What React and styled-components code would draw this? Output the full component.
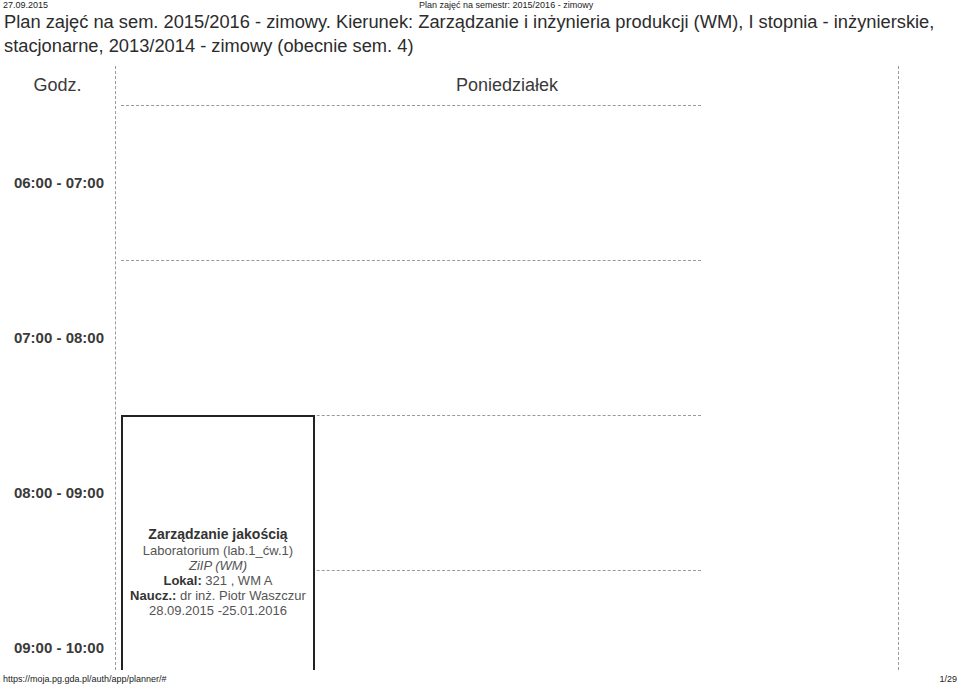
import React from 'react';
import styled, { createGlobalStyle } from 'styled-components';

const GlobalStyle = createGlobalStyle`
  html, body {
    margin: 0;
    padding: 0;
    background: #fff;
  }
  body {
    font-family: "Liberation Sans", Arial, sans-serif;
    color: #333;
  }
`;

const hours = ['06:00 - 07:00', '07:00 - 08:00', '08:00 - 09:00', '09:00 - 10:00'];

const HEAD_HEIGHT = 39;
const ROW_HEIGHT = 155;

// event placed on the day canvas by its start hour and length
const event = {
  startIndex: 2,
  length: 2,
};

const App = () => {
  return (
    <Page>
      <GlobalStyle />
      <PrintBar>
        <PrintDate>27.09.2015</PrintDate>
        <PrintTitle>Plan zajęć na semestr: 2015/2016 - zimowy</PrintTitle>
      </PrintBar>

      <Title>
        Plan zajęć na sem. 2015/2016 - zimowy. Kierunek: Zarządzanie i inżynieria produkcji (WM), I stopnia - inżynierskie, stacjonarne, 2013/2014 - zimowy (obecnie sem. 4)
      </Title>

      <Schedule>
        <TimeColumn>
          <HeadCell>Godz.</HeadCell>
          {hours.map((h) => (
            <TimeCell key={h}>{h}</TimeCell>
          ))}
        </TimeColumn>

        <DayColumn>
          <HeadCell>Poniedziałek</HeadCell>
          {hours.map((h) => (
            <HourSlot key={h} />
          ))}
          <EventBox
            style={{
              top: HEAD_HEIGHT + event.startIndex * ROW_HEIGHT,
              height: event.length * ROW_HEIGHT,
            }}
          >
            <EventTitle>Zarządzanie jakością</EventTitle>
            <EventLine>Laboratorium (lab.1_ćw.1)</EventLine>
            <EventLine italic>ZiIP (WM)</EventLine>
            <EventLine>
              <strong>Lokal:</strong> 321 , WM A
            </EventLine>
            <EventLine>
              <strong>Naucz.:</strong> dr inż. Piotr Waszczur
            </EventLine>
            <EventLine>28.09.2015 -25.01.2016</EventLine>
          </EventBox>
        </DayColumn>
      </Schedule>

      <PrintFooter>
        <span>https://moja.pg.gda.pl/auth/app/planner/#</span>
        <span>1/29</span>
      </PrintFooter>
    </Page>
  );
};

const Page = styled.div`
  width: 959px;
  height: 687px;
  overflow: hidden;
  display: flex;
  flex-direction: column;
`;

const PrintBar = styled.div`
  height: 10px;
  display: flex;
  align-items: center;
  padding: 0 3px;
  font-size: 9px;
  line-height: 10px;
  color: #222;
  white-space: nowrap;
`;

const PrintDate = styled.span``;

const PrintTitle = styled.span`
  margin-left: 371px;
`;

const Title = styled.h1`
  margin: 0;
  padding: 0 4px;
  font-size: 18.3px;
  font-weight: normal;
  line-height: 24px;
  color: #2c2c2c;
`;

const Schedule = styled.div`
  margin-top: 8px;
  height: 604px;
  display: flex;
  overflow: hidden;
  flex-shrink: 0;
`;

const TimeColumn = styled.div`
  width: 115px;
  flex-shrink: 0;
  border-right: 1px dashed #9a9a9a;
`;

const DayColumn = styled.div`
  position: relative;
  box-sizing: border-box;
  width: 783px;
  flex-shrink: 0;
  border-right: 1px dashed #9a9a9a;
`;

const HeadCell = styled.div`
  height: ${HEAD_HEIGHT}px;
  display: flex;
  align-items: center;
  justify-content: center;
  font-size: 18px;
  color: #3a3a3a;
`;

const TimeCell = styled.div`
  height: ${ROW_HEIGHT}px;
  display: flex;
  align-items: center;
  justify-content: flex-end;
  padding-right: 11px;
  font-size: 15px;
  font-weight: bold;
  color: #3a3a3a;
`;

const HourSlot = styled.div`
  box-sizing: border-box;
  margin-left: 5px;
  width: 580px;
  height: ${ROW_HEIGHT}px;
  border-top: 1px dashed #9a9a9a;
`;

const EventBox = styled.div`
  position: absolute;
  left: 5px;
  box-sizing: border-box;
  width: 194px;
  border: 2px solid #222;
  background: #fff;
  display: flex;
  flex-direction: column;
  align-items: center;
  justify-content: center;
  text-align: center;
  color: #555;
  padding-top: 4px;
`;

const EventTitle = styled.div`
  font-size: 14px;
  font-weight: bold;
  line-height: 17px;
  color: #333;
`;

const EventLine = styled.div`
  font-size: 13px;
  line-height: 15px;
  font-style: ${(props) => (props.italic ? 'italic' : 'normal')};

  strong {
    color: #333;
  }
`;

const PrintFooter = styled.div`
  flex: 1;
  display: flex;
  align-items: center;
  justify-content: space-between;
  padding: 0 2px 0 3px;
  font-size: 9px;
  color: #222;
`;

export default App;
